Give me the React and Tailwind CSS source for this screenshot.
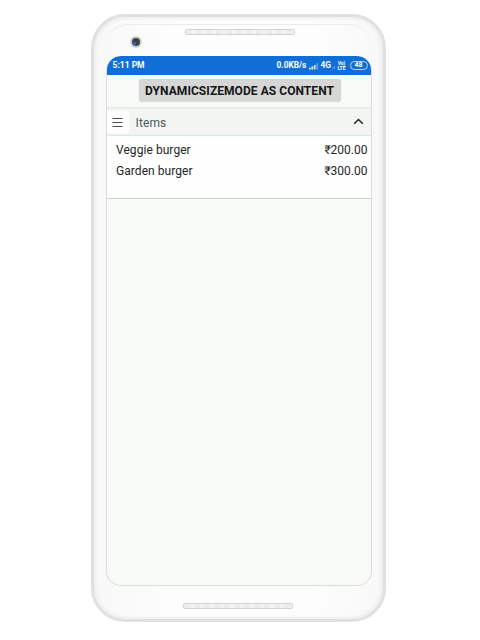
const items = [
  { name: 'Veggie burger', price: '₹200.00' },
  { name: 'Garden burger', price: '₹300.00' },
];

function Speaker({ className }) {
  return (
    <div className={`h-[6px] w-[110px] rounded-[2px] border border-[#d2d3d3] bg-[repeating-linear-gradient(90deg,#ececec_0px,#ececec_6px,#f3f3f3_6px,#f3f3f3_10px)] ${className}`} />
  );
}

function StatusBar() {
  return (
    <div className="flex h-[19px] shrink-0 items-center bg-[#0f6fd6] pr-[3px] pl-[6px] text-[8.5px] leading-[19px] font-bold text-white">
      <span className="w-[40px] whitespace-nowrap">5:11 PM</span>
      <span className="ml-auto w-[32px] whitespace-nowrap text-[8.3px]">0.0KB/s</span>
      <svg className="h-[8px] w-[10px]" viewBox="0 0 10 8">
        <path d="M0 5.8h1.7v1.7H0zM2.4 4.5h1.7v3H2.4zM4.8 2.9h1.7v4.6H4.8z" fill="#dbeafa" />
        <path d="M7.2 1h2v6.5h-2z" fill="#5b9ce3" />
      </svg>
      <span className="ml-[2px] w-[11px] whitespace-nowrap text-[8.3px]">4G</span>
      <svg className="h-[8px] w-[4px]" viewBox="0 0 4 8">
        <path d="M0.5 5h1v2h-1zM2 4h1v3h-1z" fill="#5b9ce3" />
      </svg>
      <span className="ml-px flex w-[10px] flex-col text-center text-[5px] leading-[4.5px]">
        <span>Vo)</span>
        <span>LTE</span>
      </span>
      <span className="ml-[3px] flex h-[9px] w-[18px] items-center justify-center rounded-full border border-[#b9d6f5] text-[7px] leading-[7px]">48</span>
    </div>
  );
}

function Screen() {
  return (
    <div className="mx-auto mt-[8px] flex h-[530px] w-[266px] flex-col overflow-hidden rounded-[15px] bg-[#dadddd] p-px pt-0">
      <div className="flex h-full flex-col overflow-hidden rounded-[14px] bg-[#f7faf7]">
        <StatusBar />
        <div className="flex h-[34px] shrink-0 justify-center border-b-2 border-[#ebedec] pt-[4px]">
          <button className="ml-[2px] h-[22px] w-[202px] rounded-[2px] bg-[#d5d6d5] pt-px text-[12px] leading-[23px] font-bold tracking-[0.06px] whitespace-nowrap text-[#161616] shadow-[0_1px_1px_rgba(0,0,0,0.12)]">
            DYNAMICSIZEMODE AS CONTENT
          </button>
        </div>
        <div className="flex h-[27px] shrink-0 items-center border-b border-[#dbe6ec] bg-[#f3f5f3]">
          <div className="flex h-[22px] w-[22px] items-center justify-center bg-[#fdfefd]">
            <svg className="h-[11px] w-[11px]" viewBox="0 0 11 11" fill="none" stroke="#454a4d" strokeWidth="1.1">
              <path d="M0.5 1.5h10M0.5 5.5h10M0.5 9.5h10" />
            </svg>
          </div>
          <span className="ml-[7px] pt-px text-[12px] leading-[26px] tracking-[0.01em] text-[#4a5961]">Items</span>
          <svg className="mr-[7px] mb-[2px] ml-auto h-[7px] w-[11px]" viewBox="0 0 11 7" fill="none" stroke="#222" strokeWidth="1.5">
            <path d="M1.2 5.7L5.5 1.5L9.8 5.7" />
          </svg>
        </div>
        <div className="h-[63px] shrink-0 border-b border-[#cfd1d1] bg-[#fdfefd] pt-[4px] pr-[3px] pl-[9.5px] text-[12px] leading-[21px] text-[#252727]">
          {items.map((item) => (
            <div key={item.name} className="flex justify-between">
              <span className="tracking-[0.06px]">{item.name}</span>
              <span>{item.price}</span>
            </div>
          ))}
        </div>
      </div>
    </div>
  );
}

export default function App() {
  return (
    <div className="h-[640px] w-[480px] overflow-hidden bg-white pt-[14px] pl-[91px] font-['Roboto','Noto_Sans',sans-serif]">
      <div className="relative h-[608px] w-[295px] rounded-[34px] border-[3px] border-[#dfe1e1] bg-[linear-gradient(90deg,#f8f8f8,#fdfdfd_28%,#fdfdfd_75%,#f8f8f8)] pt-[12px] shadow-[inset_0_0_4px_1px_rgba(0,0,0,0.08)]">
        <div className="absolute top-[7px] right-[13px] left-[13px] h-[20px] rounded-t-[20px] border-t border-[#ececec]" />
        <Speaker className="relative ml-[91px]" />
        <div className="mt-px ml-[36px] flex h-[12px] w-[12px] items-center justify-center rounded-full bg-[#d0d1d1]">
          <div className="flex h-[8px] w-[8px] items-center rounded-full bg-[#3d4249] pt-[2px] pl-px">
            <div className="h-[3px] w-[3px] rounded-full bg-[#2f66cf]" />
          </div>
        </div>
        <Screen />
        <Speaker className="mt-[17px] ml-[89px]" />
      </div>
    </div>
  );
}
